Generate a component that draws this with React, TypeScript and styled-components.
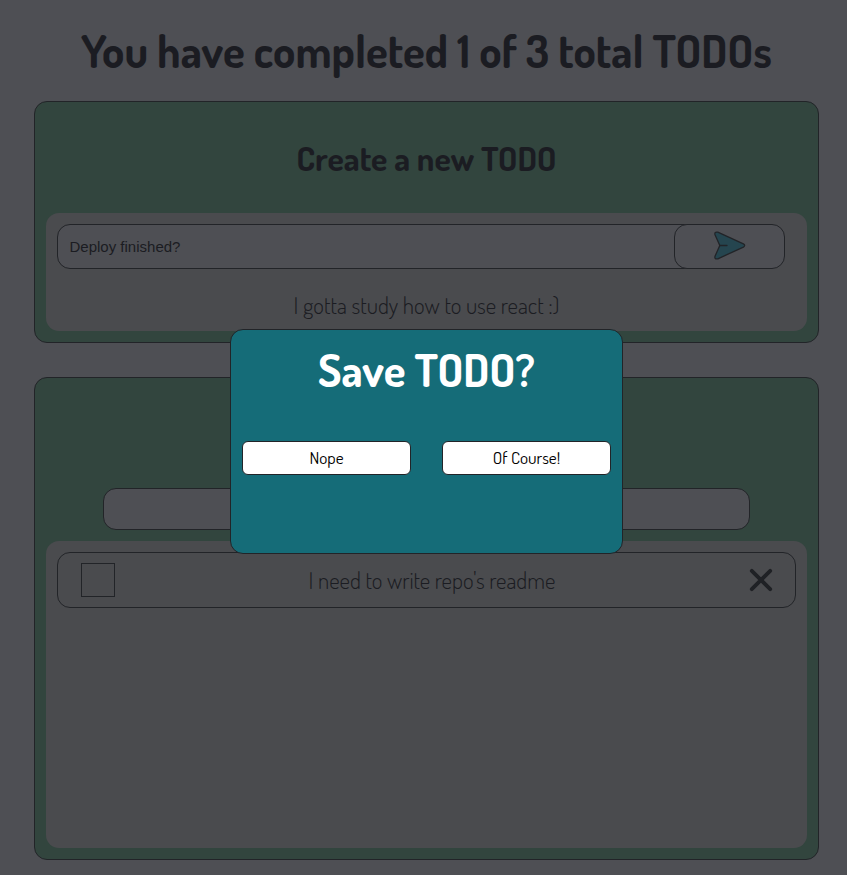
import React from "react";
import styled, { createGlobalStyle } from "styled-components";

const ink = "#1b1c22";
const line = "#222428";
const page = "#4e4f54";
const tray = "#4a4b4e";
const display = "Dosis, Lato, sans-serif";

const GlobalStyle = createGlobalStyle`
  * { box-sizing: border-box; }
  html, body { margin: 0; height: 875px; overflow: hidden; background: ${page}; }
  h1, h2, p { margin: 0; }
`;

const Page = styled.main`
  width: 847px;
  height: 875px;
  padding: 0 28px 0 34px;
  background: ${page};
  color: ${ink};
  font-family: ${display};
  display: flex;
  flex-direction: column;
`;

const Headline = styled.h1`
  height: 101px;
  font-size: 45px;
  font-weight: 700;
  line-height: 102px;
  text-align: center;
  white-space: nowrap;
`;

const Card = styled.section<{ $height: number }>`
  flex: none;
  height: ${(p) => p.$height}px;
  padding: 0 11px 11px;
  border: 1px solid ${line};
  border-radius: 13px;
  background: #32453e;
  display: flex;
  flex-direction: column;

  & + & {
    margin-top: 34px;
  }
`;

const CardTitle = styled.h2<{ $height: number }>`
  flex: none;
  height: ${(p) => p.$height}px;
  font-size: 33.75px;
  font-weight: 700;
  line-height: 112px;
  text-align: center;
`;

const Tray = styled.div<{ $height: number }>`
  flex: none;
  height: ${(p) => p.$height}px;
  padding: 11px;
  border-radius: 13px;
  background: ${tray};
`;

const Form = styled.form`
  display: flex;
  height: 45px;
`;

const TodoInput = styled.input`
  width: 630px;
  height: 45px;
  padding: 0 11.5px;
  border: 1px solid ${line};
  border-radius: 13px 0 0 13px;
  background: ${page};
  color: ${ink};
  font: 15px "Liberation Sans", Arial, sans-serif;
  outline: none;
`;

const SendButton = styled.button`
  width: 111px;
  height: 45px;
  margin-left: -13px;
  padding: 0 0 1px 1px;
  border: 1px solid ${line};
  border-radius: 13px;
  background: ${page};
  display: flex;
  align-items: center;
  justify-content: center;
`;

const LightText = styled.p`
  font-size: 23px;
  font-weight: 300;
  line-height: 30px;
  text-align: center;
`;

const Preview = styled(LightText)`
  margin-top: 21px;
`;

const SearchInput = styled.input`
  flex: none;
  align-self: center;
  width: 647px;
  height: 42px;
  margin-bottom: 11px;
  padding: 0 12px;
  border: 1px solid ${line};
  border-radius: 13px;
  background: ${page};
`;

const TodoRow = styled.div`
  width: 739px;
  height: 56px;
  padding: 0 22px 0 23px;
  border: 1px solid ${line};
  border-radius: 13px;
  display: grid;
  grid-template-columns: 34px 1fr 24px;
  align-items: center;
`;

const CheckBox = styled.span`
  width: 34px;
  height: 34px;
  border: 1px solid ${line};
`;

const Backdrop = styled.div`
  position: fixed;
  inset: 0;
  padding: 329px 0 0 230px;
`;

const Dialog = styled.div`
  width: 393px;
  height: 225px;
  padding: 0 11px;
  border: 1px solid ${line};
  border-radius: 13px;
  background: #156c78;
  font-family: ${display};
`;

const DialogTitle = styled.h1`
  height: 111px;
  color: #fff;
  font-size: 45px;
  font-weight: 700;
  line-height: 80px;
  text-align: center;
`;

const DialogActions = styled.div`
  display: flex;
  justify-content: space-between;
`;

const DialogButton = styled.button`
  width: 169px;
  height: 34px;
  padding: 0 0 2px;
  border: 1px solid ${line};
  border-radius: 6px;
  background: #fff;
  color: #000;
  font: 400 17.2px ${display};
`;

const SendIcon = () => (
  <svg width="34" height="32" viewBox="0 0 34 32" fill="#25454f" stroke={line} strokeWidth="1.3" strokeLinejoin="round" strokeLinecap="round">
    <path d="M4.8 2.2 30.4 13.9Q33 15.5 30.4 17.1L4.8 28.8Q1.2 29.6 2 26.3L6.8 15.5 2 4.7Q1.2 1.4 4.8 2.2Z" />
    <path d="M6.8 15.5H14" />
  </svg>
);

const CloseIcon = () => (
  <svg width="24" height="24" viewBox="0 0 24 24" fill="none" stroke="#1f2125" strokeWidth="3.8" strokeLinecap="round">
    <path d="M2.8 2.8 21.2 21.2M21.2 2.8 2.8 21.2" />
  </svg>
);

export default function App() {
  return (
    <>
      <GlobalStyle />
      <Page>
        <Headline>You have completed 1 of 3 total TODOs</Headline>
        <Card $height={242}>
          <CardTitle $height={111}>Create a new TODO</CardTitle>
          <Tray $height={118}>
            <Form>
              <TodoInput defaultValue="Deploy finished?" />
              <SendButton type="button" aria-label="Send">
                <SendIcon />
              </SendButton>
            </Form>
            <Preview>I gotta study how to use react :)</Preview>
          </Tray>
        </Card>
        <Card $height={483}>
          <CardTitle $height={110} />
          <SearchInput aria-label="Search" />
          <Tray $height={307}>
            <TodoRow>
              <CheckBox />
              <LightText>I need to write repo's readme</LightText>
              <CloseIcon />
            </TodoRow>
          </Tray>
        </Card>
      </Page>
      <Backdrop>
        <Dialog role="dialog">
          <DialogTitle>Save TODO?</DialogTitle>
          <DialogActions>
            <DialogButton>Nope</DialogButton>
            <DialogButton>Of Course!</DialogButton>
          </DialogActions>
        </Dialog>
      </Backdrop>
    </>
  );
}
